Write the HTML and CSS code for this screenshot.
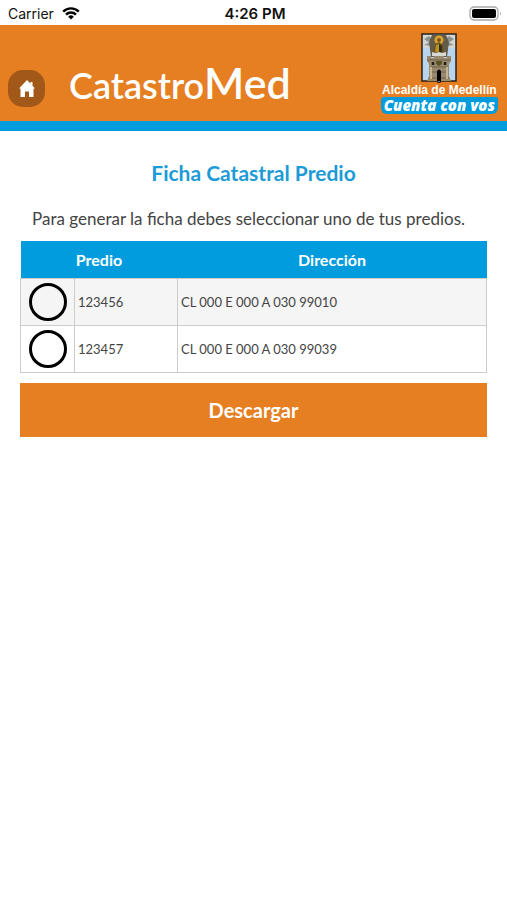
FILE: index.html
```html
<!DOCTYPE html>
<html lang="es">
<head>
    <meta charset="UTF-8">
    <meta name="viewport" content="width=device-width, initial-scale=1.0">
    <title>CatastroMed</title>
    <link rel="stylesheet" href="styles.css">
</head>
<body>
    <div class="status-bar">
        <div class="carrier">
            <span>Carrier</span>
            <svg class="wifi" viewBox="0 0 18 13" aria-hidden="true">
                <g fill="none" stroke="#000" stroke-width="2.4">
                    <path d="M1.2 4.6a11 11 0 0 1 15.6 0"/>
                    <path d="M4 7.6a7 7 0 0 1 10 0"/>
                </g>
                <path d="M9 12.6 6.2 9.7a4 4 0 0 1 5.6 0z"/>
            </svg>
        </div>
        <div class="time">4:26 PM</div>
        <svg class="battery" viewBox="0 0 33 15" aria-hidden="true">
            <rect x="1" y="1" width="28" height="13" rx="4" fill="#fff" stroke="#a8a8a8" stroke-width="1.3"/>
            <rect x="3" y="3" width="24" height="9" rx="2"/>
            <path d="M31 5.5q2 2 0 4z" fill="#a8a8a8"/>
        </svg>
    </div>

    <header class="header">
        <a class="home" href="#" aria-label="Inicio">
            <svg viewBox="0 0 16 17" aria-hidden="true">
                <path fill="#fff" d="M8 0 0 8.500h1.500V17h4.500v-5.500h4V17h4.500V8.500H16L13.500 5.800V2h-2v1.700z"/>
            </svg>
        </a>
        <h1>Catastro<span>Med</span></h1>
        <div class="logo">
            <svg class="shield" viewBox="0 0 36 50" aria-hidden="true">
                <path d="M1 1h34v47H20l-2 2-2-2H1z" fill="#b9d5ee" stroke="#2b211a" stroke-width="1.500"/>
                <path d="M2 2h32v13H2z" fill="#d4d6d2"/>
                <path d="M3 6l5-3 3 3-4 3zM3 12l6-3 2 4zM33 6l-5-3-3 3 4 3zM33 12l-6-3-2 4z" fill="#8e9290"/>
                <path d="M11 2h14l3 7-2 15H10L8 9z" fill="#655b49"/>
                <circle cx="18" cy="7" r="4.500" fill="#dba630"/>
                <circle cx="18" cy="7" r="2" fill="#7a5425"/>
                <path d="M14 11l4-2 4 3 1 8H12z" fill="#6b571b"/>
                <path d="M15 12l3-1v8h-4z" fill="#b79224"/>
                <path d="M18 11l3 2v6h-3z" fill="#342e20"/>
                <path d="M11 19l4 1 3-1 3 1 4-1v4H11z" fill="#d8d9d3"/>
                <path d="M6 23h4v2h3v-2h10v2h3v-2h4v5l-2 3v12l2 5H6l2-5V31l-2-3z" fill="#9a8a6d"/>
                <path d="M6 27h24M9 34h18M9 39h18M8 45h20" stroke="#6b604b"/>
                <path d="M12 29v3M24 29v3" stroke="#211e18" stroke-width="2.500"/>
                <path d="M15 28h6v3l-3 2-3-2z" fill="#595524"/>
                <path d="M10 34v12M26 34v12" stroke="#c4b491" stroke-width="2"/>
                <path d="M16 48V38q2-3 4 0v10z"/>
            </svg>
            <div class="city">Alcaldía de Medellín</div>
            <div class="slogan">Cuenta con vos</div>
        </div>
    </header>

    <main>
        <h2>Ficha Catastral Predio</h2>
        <form>
            <p>Para generar la ficha debes seleccionar uno de tus predios.</p>
            <table>
                <colgroup>
                    <col class="col-radio">
                    <col class="col-predio">
                    <col>
                </colgroup>
                <thead>
                    <tr>
                        <th colspan="2">Predio</th>
                        <th>Dirección</th>
                    </tr>
                </thead>
                <tbody>
                    <tr>
                        <td class="pick"><input type="radio" id="predio1" name="predio" value="123456"></td>
                        <td><label for="predio1">123456</label></td>
                        <td>CL 000 E 000 A 030 99010</td>
                    </tr>
                    <tr>
                        <td class="pick"><input type="radio" id="predio2" name="predio" value="123457"></td>
                        <td><label for="predio2">123457</label></td>
                        <td>CL 000 E 000 A 030 99039</td>
                    </tr>
                </tbody>
            </table>
            <button type="button">Descargar</button>
        </form>
    </main>
</body>
</html>
```
FILE: styles.css
```css
* {
    box-sizing: border-box;
}

body {
    margin: 0;
    font-family: Lato, sans-serif;
    background: #fff;
    color: #444;
}

/* phone status bar */
.status-bar {
    display: grid;
    grid-template-columns: 1fr auto 1fr;
    align-items: center;
    height: 25px;
    padding: 2px 5px 0 8px;
    font-family: Inter, sans-serif;
    font-size: 14px;
    color: #111;
}

.carrier {
    display: flex;
    align-items: center;
    gap: 8px;
}

.wifi {
    width: 18px;
    height: 13px;
}

.time {
    font-size: 15px;
    font-weight: 600;
}

.battery {
    width: 33px;
    height: 15px;
    justify-self: end;
}

/* header */
.header {
    display: flex;
    align-items: flex-end;
    height: 106px;
    padding: 0 9px 7px 8px;
    background: #e67e22;
    border-bottom: 10px solid #009cde;
}

.home {
    display: flex;
    align-items: center;
    justify-content: center;
    width: 37px;
    height: 37px;
    margin-bottom: 7px;
    border-radius: 15px;
    background: #a15818;
}

.home svg {
    width: 16px;
    height: 17px;
}

h1 {
    flex: 1;
    margin: 0 0 0 24px;
    font-size: 36px;
    line-height: 58px;
    font-weight: 600;
    color: #fff;
}

h1 span {
    font-size: 43px;
}

.logo {
    display: flex;
    flex-direction: column;
    align-items: center;
    color: #fff;
    white-space: nowrap;
}

.shield {
    width: 36px;
    height: 50px;
}

.city {
    font-family: "Liberation Sans", Arial, sans-serif;
    font-size: 12px;
    font-weight: bold;
    line-height: 14px;
}

.slogan {
    padding: 0 3px;
    border-radius: 3px 2px 6px 6px;
    background: #009cde;
    font-family: "Open Sans", sans-serif;
    font-size: 15px;
    font-weight: 800;
    font-style: italic;
    line-height: 17px;
}

/* content */
main {
    padding: 0 20px;
}

h2 {
    margin: 28px 0 20px;
    font-size: 21px;
    line-height: 28px;
    font-weight: 700;
    text-align: center;
    color: #1c9bd7;
}

p {
    margin: 0 12px 10px;
    font-size: 17px;
    line-height: 24px;
}

table {
    width: 100%;
    table-layout: fixed;
    border-collapse: collapse;
}

.col-radio {
    width: 54px;
}

.col-predio {
    width: 103px;
}

th {
    height: 37px;
    padding: 0;
    background: #009cde;
    font-size: 16px;
    font-weight: 700;
    color: #fff;
}

td {
    height: 47px;
    padding: 0 3px;
    border: 1px solid #ccc;
    font-size: 13px;
}

tbody tr:nth-child(odd) {
    background: #f5f5f5;
}

.pick {
    text-align: center;
}

input[type="radio"] {
    appearance: none;
    display: block;
    width: 38px;
    height: 38px;
    margin: 0 auto;
    border: 3px solid #000;
    border-radius: 50%;
}

input[type="radio"]:checked {
    background: #e67e22;
}

button {
    display: block;
    width: 100%;
    height: 54px;
    margin-top: 10px;
    padding: 0;
    border: none;
    background: #e67e22;
    font-family: Lato, sans-serif;
    font-size: 20px;
    font-weight: 700;
    color: #fff;
    cursor: pointer;
}
```
